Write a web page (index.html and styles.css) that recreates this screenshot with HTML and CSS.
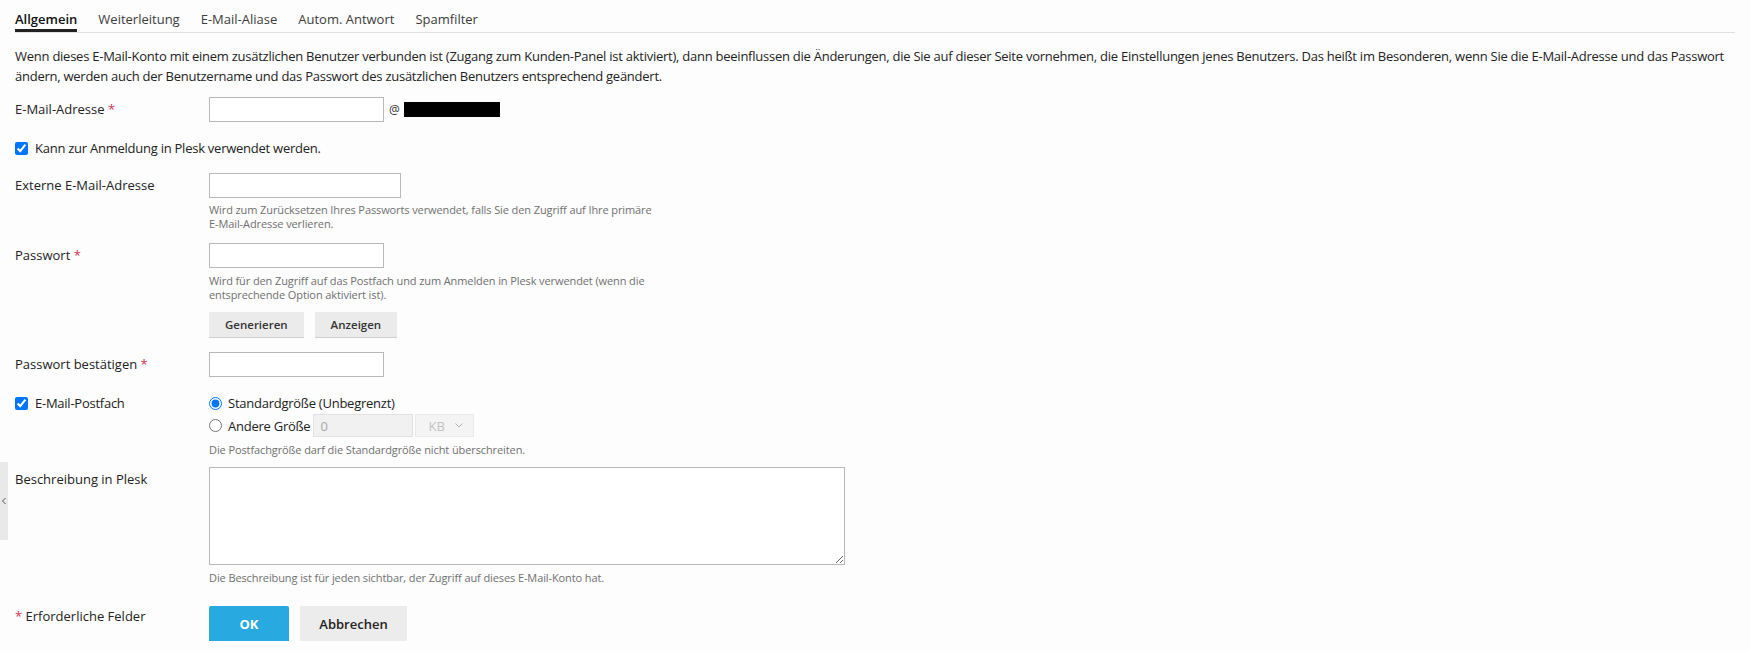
FILE: index.html
```html
<!DOCTYPE html>
<html lang="de">
<head>
    <meta charset="UTF-8">
    <title>E-Mail-Konto bearbeiten</title>
    <link rel="stylesheet" href="styles.css">
</head>
<body>
    <div class="side-toggle">
        <svg width="6" height="8" viewBox="0 0 6 8"><path d="M4.5 1 L1.5 4 L4.5 7" fill="none" stroke="#555" stroke-width="1"/></svg>
    </div>

    <div class="page">
        <div class="tabs">
            <a class="tab active">Allgemein</a>
            <a class="tab">Weiterleitung</a>
            <a class="tab">E-Mail-Aliase</a>
            <a class="tab">Autom. Antwort</a>
            <a class="tab">Spamfilter</a>
        </div>

        <p class="intro">Wenn dieses E-Mail-Konto mit einem zusätzlichen Benutzer verbunden ist (Zugang zum Kunden-Panel ist aktiviert), dann beeinflussen die Änderungen, die Sie auf dieser Seite vornehmen, die Einstellungen jenes Benutzers. Das heißt im Besonderen, wenn Sie die E-Mail-Adresse und das Passwort ändern, werden auch der Benutzername und das Passwort des zusätzlichen Benutzers entsprechend geändert.</p>

        <div class="row row-email">
            <label class="row-label">E-Mail-Adresse <span class="req">*</span></label>
            <div class="row-field inline">
                <input class="text" type="text">
                <span class="at">@</span>
                <span class="redacted"></span>
            </div>
        </div>

        <div class="check-row">
            <label class="check"><input type="checkbox" checked> Kann zur Anmeldung in Plesk verwendet werden.</label>
        </div>

        <div class="row row-ext">
            <label class="row-label">Externe E-Mail-Adresse</label>
            <div class="row-field">
                <input class="text wide" type="text">
                <div class="hint">Wird zum Zurücksetzen Ihres Passworts verwendet, falls Sie den Zugriff auf Ihre primäre E-Mail-Adresse verlieren.</div>
            </div>
        </div>

        <div class="row row-pass">
            <label class="row-label">Passwort <span class="req">*</span></label>
            <div class="row-field">
                <input class="text" type="password">
                <div class="hint">Wird für den Zugriff auf das Postfach und zum Anmelden in Plesk verwendet (wenn die entsprechende Option aktiviert ist).</div>
                <div class="small-buttons">
                    <button class="btn-small">Generieren</button>
                    <button class="btn-small">Anzeigen</button>
                </div>
            </div>
        </div>

        <div class="row row-confirm">
            <label class="row-label">Passwort bestätigen <span class="req">*</span></label>
            <div class="row-field">
                <input class="text" type="password">
            </div>
        </div>

        <div class="row row-mailbox">
            <label class="row-label check"><input type="checkbox" checked> E-Mail-Postfach</label>
            <div class="row-field">
                <label class="radio"><input type="radio" name="size" checked> Standardgröße (Unbegrenzt)</label>
                <div class="radio-line">
                    <label class="radio"><input type="radio" name="size"> Andere Größe</label>
                    <input class="size-input" type="text" value="0" disabled>
                    <span class="select-wrap">
                        <select class="unit" disabled><option>KB</option></select>
                        <svg class="select-arrow" width="8" height="5" viewBox="0 0 8 5"><path d="M0.5 0.5 L4 4 L7.5 0.5" fill="none" stroke="#b0b0b0" stroke-width="1"/></svg>
                    </span>
                </div>
                <div class="hint">Die Postfachgröße darf die Standardgröße nicht überschreiten.</div>
            </div>
        </div>

        <div class="row row-desc">
            <label class="row-label">Beschreibung in Plesk</label>
            <div class="row-field">
                <textarea class="desc"></textarea>
                <div class="hint">Die Beschreibung ist für jeden sichtbar, der Zugriff auf dieses E-Mail-Konto hat.</div>
            </div>
        </div>

        <div class="row row-footer">
            <div class="row-label"><span class="req">*</span> Erforderliche Felder</div>
            <div class="row-field inline">
                <button class="btn-primary">OK</button>
                <button class="btn-cancel">Abbrechen</button>
            </div>
        </div>
    </div>
</body>
</html>
```

FILE: styles.css
```css
body {
    margin: 0;
    background: #fdfdfd;
    font-family: "Open Sans", "Liberation Sans", sans-serif;
    font-size: 13px;
    color: #222;
}

.page {
    padding: 0 15px;
}

.side-toggle {
    position: absolute;
    left: 0;
    top: 462px;
    width: 8px;
    height: 78px;
    background: #e9e9e9;
    display: flex;
    align-items: center;
    justify-content: center;
}

/* tabs */
.tabs {
    display: flex;
    border-bottom: 1px solid #e0e0e0;
    height: 32px;
}

.tab {
    padding-top: 10px;
    line-height: 18px;
    height: 19px;
    margin-right: 21px;
    color: #3c3c3c;
    border-bottom: 3px solid transparent;
}

.tab.active {
    color: #111;
    font-weight: 600;
    border-bottom-color: #222;
}

/* text */
.intro {
    margin: 13px 0 0;
    line-height: 20px;
    letter-spacing: -0.25px;
}

.req {
    color: #d6304f;
}

.hint {
    font-size: 11px;
    line-height: 14px;
    color: #707070;
    max-width: 450px;
    margin-top: 6px;
    letter-spacing: -0.1px;
}

/* rows */
.row {
    display: flex;
    align-items: flex-start;
}

.row-label {
    width: 194px;
    flex: none;
    line-height: 25px;
}

.row-field.inline {
    display: flex;
    align-items: center;
}

.row-email { margin-top: 11px; }
.row-ext { margin-top: 15px; }
.row-pass { margin-top: 12px; }
.row-confirm { margin-top: 15px; }
.row-mailbox { margin-top: 15px; }
.row-desc { margin-top: 10px; }
.row-footer { margin-top: 21px; }

.row-ext .hint { margin-top: 5px; }
.row-desc .hint { margin-top: 6px; }

input.text {
    box-sizing: border-box;
    width: 175px;
    height: 25px;
    border: 1px solid #b9b9b9;
    background: #fff;
    padding: 2px 6px;
    font: inherit;
    margin: 0;
}

input.text.wide {
    width: 192px;
}

.at {
    margin-left: 5px;
    font-size: 12px;
    color: #333;
}

.redacted {
    display: inline-block;
    width: 96px;
    height: 15px;
    margin-left: 4px;
    background: #000;
}

/* checkboxes and radios */
.check-row {
    margin-top: 16px;
    line-height: 20px;
}

.check {
    display: flex;
    align-items: center;
    letter-spacing: -0.25px;
}

.check input {
    margin: 0 7px 0 0;
    width: 13px;
    height: 13px;
}

.row-mailbox .row-label {
    line-height: 22px;
    height: 22px;
}

.radio {
    display: flex;
    align-items: center;
    line-height: 22px;
    letter-spacing: -0.25px;
}

.radio input {
    margin: 0 6px 0 0;
    width: 13px;
    height: 13px;
}

.radio-line {
    display: flex;
    align-items: center;
    height: 23px;
}

.size-input {
    box-sizing: border-box;
    width: 100px;
    height: 23px;
    margin: 0 0 0 3px;
    border: 1px solid #e2e2e2;
    background: #f1f1f1;
    color: #a8a8a8;
    font: inherit;
    padding: 0 6px;
}

.select-wrap {
    position: relative;
    margin-left: 2px;
}

.unit {
    appearance: none;
    -webkit-appearance: none;
    box-sizing: border-box;
    width: 59px;
    height: 23px;
    border: 1px solid #e2e2e2;
    background: #f1f1f1;
    color: #a8a8a8;
    font: inherit;
    padding: 0 0 0 12px;
    display: block;
}

.select-arrow {
    position: absolute;
    right: 11px;
    top: 9px;
}

.row-mailbox .hint {
    margin-top: 6px;
}

/* buttons */
.small-buttons {
    display: flex;
    gap: 11px;
    margin-top: 10px;
}

.btn-small {
    height: 25px;
    padding: 0 16px;
    border: none;
    background: #ebebeb;
    box-shadow: 0 1px 0 #cfcfcf;
    font-family: inherit;
    font-size: 11.5px;
    font-weight: 600;
    color: #333;
}

.desc {
    box-sizing: border-box;
    width: 636px;
    height: 98px;
    border: 1px solid #b9b9b9;
    background: #fff;
    margin: 0;
    display: block;
    font: inherit;
}

.row-footer .row-label {
    line-height: 20px;
}

.btn-primary {
    width: 80px;
    height: 35px;
    border: none;
    border-radius: 2px;
    background: #28a9e0;
    box-shadow: 0 1px 0 #1b8fc2;
    color: #fff;
    font-family: inherit;
    font-size: 13px;
    font-weight: 700;
}

.btn-cancel {
    width: 107px;
    height: 35px;
    margin-left: 11px;
    border: none;
    background: #ececec;
    box-shadow: 0 1px 0 #c8c8c8;
    color: #222;
    font-family: inherit;
    font-size: 13px;
    font-weight: 600;
}
```
